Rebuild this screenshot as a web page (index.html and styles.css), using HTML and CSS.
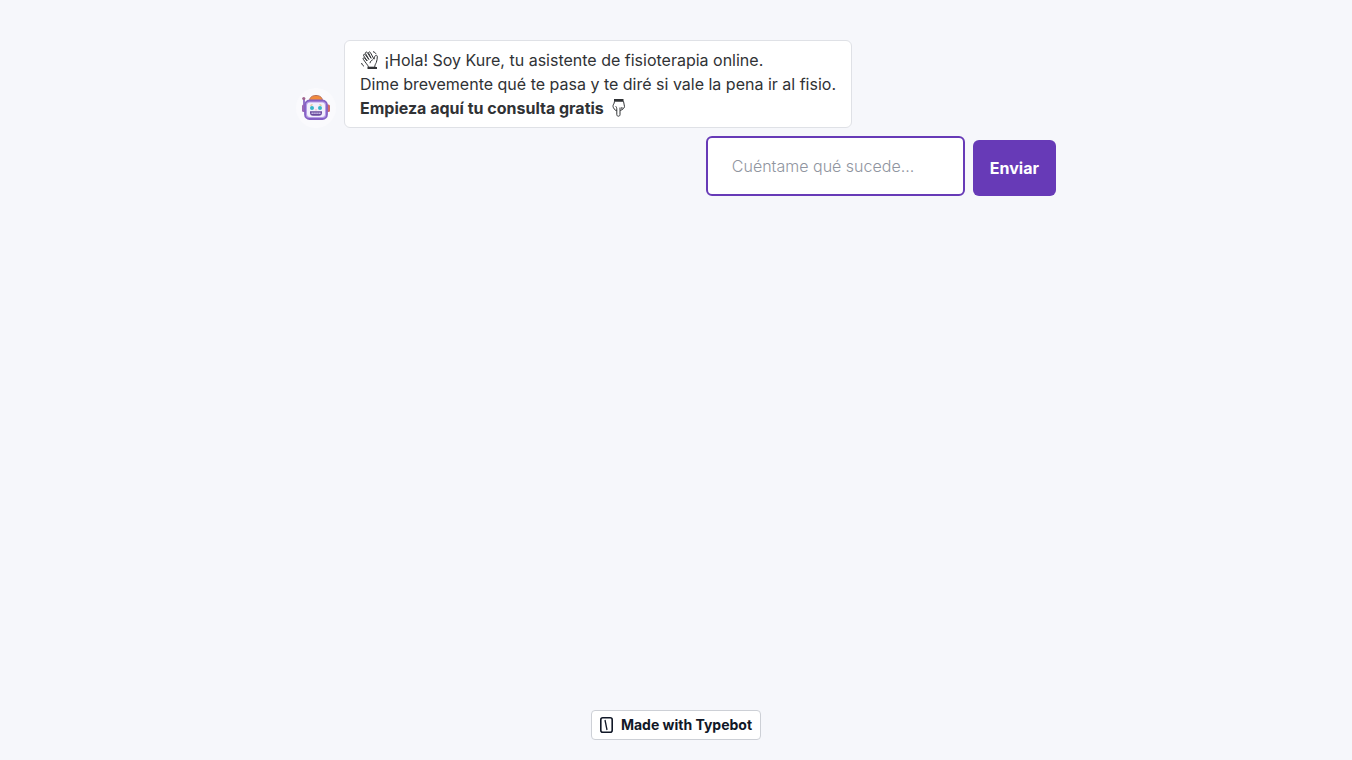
FILE: index.html
```html
<!DOCTYPE html>
<html lang="es">
<head>
    <meta charset="utf-8">
    <meta name="viewport" content="width=device-width, initial-scale=1">
    <title>Kure</title>
    <link rel="stylesheet" href="styles.css">
</head>
<body>
    <main class="chat">
        <div class="message">
            <svg class="avatar" viewBox="0 0 40 40" aria-hidden="true">
                <circle cx="20" cy="20" r="20" fill="#fafafd"/>
                <!-- antenna and ears -->
                <path d="M8 11v7" stroke="#9575cd" stroke-width="2"/>
                <circle cx="7.800" cy="10.500" r="1.600" fill="#a0648f"/>
                <rect x="6" y="16.500" width="4" height="7.500" rx="1.500" fill="#9a67b5"/>
                <rect x="30" y="16.500" width="4" height="7.500" rx="1.500" fill="#d06c67"/>
                <!-- dome -->
                <path d="M13.500 13c0-4 3-5.500 6.500-5.500s6.500 1.500 6.500 5.500z" fill="#f28b3c" stroke="#b8705c"/>
                <!-- head -->
                <rect x="9" y="12.500" width="22" height="18.500" rx="4.500" fill="#b69be6" stroke="#8460c4" stroke-width="1.8"/>
                <rect x="11" y="14.500" width="18" height="14.500" rx="3" fill="#f1effc"/>
                <!-- face -->
                <circle cx="16" cy="20" r="2" fill="#37b5c8"/>
                <circle cx="24" cy="20" r="2" fill="#37b5c8"/>
                <path d="M14.500 17.300l2-.5M23.500 16.800l2 .5" stroke="#ddb16a"/>
                <path d="M19.300 22.300l.7-1.300.7 1.300z" fill="#ef8a7b"/>
                <path d="M14 23.200h12v1.500a3 3 0 0 1-3 3h-6a3 3 0 0 1-3-3z" fill="#694a9c"/>
                <path d="M15.500 25.300h9" stroke="#cfc3ea" stroke-width="1.500" stroke-dasharray="1.400 .500"/>
            </svg>
            <div class="bubble">
                <p>
                    <svg class="emoji" viewBox="0 0 20 20" role="img" aria-label="Mano saludando">
                        <path d="M8.500 17.200c-.3-1.500-1.200-2.300-2-3.400L3.300 9.300c-.8-1.200.6-2.100 1.500-1l2.400 2.700L3.700 5.800c-.8-1.300.8-2.200 1.600-1.100l3.600 4.800-3.300-5.900c-.7-1.300 1-2.200 1.800-1l3.700 5.700-2.400-5c-.6-1.300 1-2 1.700-.8l3.600 6.700c.4-.8.3-2 .9-3 .8-1.500 2.700-1 2.400.6-.2 2-.2 4-1 5.700-.8 1.600-1.600 2.700-1.500 4.700z"/>
                        <path d="M10 13.200c.2-1.600 1.200-2.800 2.800-3.500M13 1.700c1.500.3 2.400 1 2.900 2.200M1.500 13c.4 1.500 1.200 2.600 2.500 3.300"/>
                        <path class="cuff" d="M7.500 18h9.500"/>
                    </svg>
                    ¡Hola! Soy Kure, tu asistente de fisioterapia online.
                </p>
                <p>Dime brevemente qué te pasa y te diré si vale la pena ir al fisio.</p>
                <p>
                    <strong>Empieza aquí tu consulta gratis</strong>
                    <svg class="emoji" viewBox="0 0 20 20" role="img" aria-label="Dedo hacia abajo">
                        <path class="cuff" d="M6 2h9.500"/>
                        <path d="M6.500 3.200c0 1.500-.6 2.500-1.200 3.600-.5 1-.3 2.200.3 3.200l1.700 2.200c.5.600 1.200.4 1.500-.2v4.700c0 2 3.200 2 3.200 0v-4.500c.9.500 1.800.1 1.900-.8.900.2 1.500-.4 1.500-1.300.8-.1 1.100-.6 1.100-1.400 0-2-.9-3.200-1-5.400z"/>
                        <path d="M8.800 12c.1-2-.3-3-1.200-3.800M12 12.200V9.500M13.900 11.200V9"/>
                    </svg>
                </p>
            </div>
        </div>
        <form class="reply">
            <input class="reply-input" type="text" aria-label="Tu consulta" placeholder="Cuéntame qué sucede...">
            <button class="reply-send" type="submit">Enviar</button>
        </form>
    </main>
    <footer class="footer">
        <a class="badge" href="#">
            <svg class="badge-logo" viewBox="0 0 13 16" fill="none" stroke="currentColor" aria-hidden="true">
                <rect x=".8" y=".8" width="11.400" height="14.400" rx="2" stroke-width="1.600"/>
                <path d="M5 3l2 10" stroke-width="1.300"/>
            </svg>
            <span>Made with Typebot</span>
        </a>
    </footer>
</body>
</html>
```
FILE: styles.css
```css
:root {
    --bg-color: #f6f7fb;
    --text-color: #303235;
    --primary-color: #673ab7;
    --border-color: #dfe1e6;
}

* { box-sizing: border-box; }

body {
    display: flex;
    flex-direction: column;
    min-height: 100vh;
    margin: 0;
    background-color: var(--bg-color);
    color: var(--text-color);
    font-family: Inter, "Open Sans", sans-serif;
    font-size: 16px;
    line-height: 24px;
}

/* --- CHAT --- */
.chat {
    display: flex;
    flex-direction: column;
    gap: 8px;
    flex: 1;
    width: 100%;
    max-width: 800px;
    margin: 0 auto;
    padding: 40px 20px;
}

.message {
    display: flex;
    align-items: flex-end;
    gap: 8px;
}

.avatar {
    flex: none;
    width: 40px;
    height: 40px;
}

.bubble {
    padding: 7px 15px;
    border: 1px solid var(--border-color);
    border-radius: 6px;
    background-color: white;
}
.bubble p { margin: 0; }
.bubble strong { font-weight: 700; }

/* line-drawn emoji */
.emoji {
    width: 20px;
    height: 20px;
    vertical-align: text-bottom;
    fill: none;
    stroke: currentColor;
    stroke-linejoin: round;
}
.emoji .cuff { stroke-width: 2; }

/* --- REPLY FORM --- */
.reply {
    display: flex;
    justify-content: flex-end;
    align-items: flex-end;
    gap: 8px;
}

.reply-input {
    flex: 0 1 259px;
    min-width: 0;
    height: 60px;
    padding: 0 24px;
    border: 2px solid var(--primary-color);
    border-radius: 6px;
    background-color: white;
    color: var(--text-color);
    font: inherit;
    font-weight: 300;
    outline: none;
}
.reply-input::placeholder { color: #9095a0; opacity: 1; }

.reply-send {
    height: 56px;
    padding: 0 17px;
    border: none;
    border-radius: 6px;
    background-color: var(--primary-color);
    color: white;
    font: inherit;
    font-weight: 700;
    cursor: pointer;
}

/* --- FOOTER --- */
.footer {
    display: flex;
    justify-content: center;
    padding-bottom: 20px;
}

.badge {
    display: flex;
    align-items: center;
    gap: 8px;
    padding: 4px 8px;
    border: 1px solid #cdd0d6;
    border-radius: 4px;
    background-color: white;
    color: #111827;
    font-size: 14px;
    line-height: 20px;
    font-weight: 700;
    text-decoration: none;
}

.badge-logo {
    width: 13px;
    height: 16px;
}
```
